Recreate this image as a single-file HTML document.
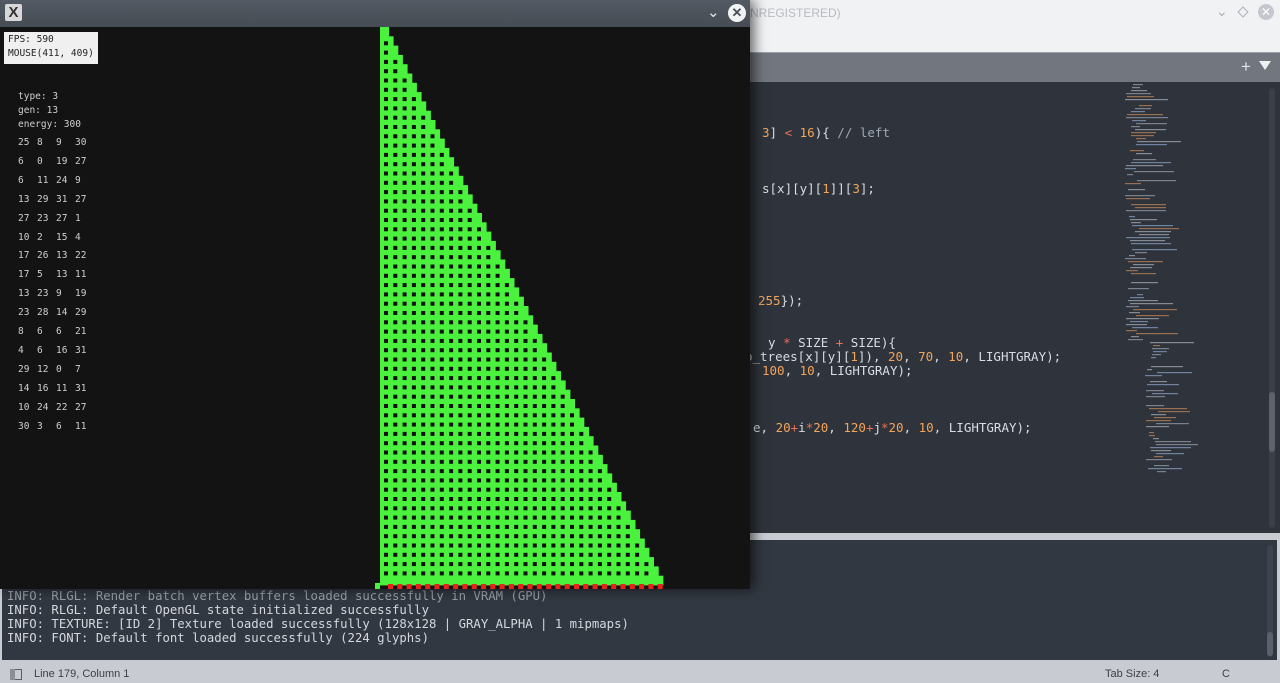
<!DOCTYPE html>
<html><head><meta charset="utf-8"><style>
*{margin:0;padding:0;box-sizing:border-box}
body{width:1280px;height:683px;overflow:hidden;background:#2f343c;position:relative;font-family:"Liberation Sans",sans-serif}
.abs{position:absolute}
.code{position:absolute;font-family:"DejaVu Sans Mono","Liberation Mono",monospace;font-size:12.5px;color:#d8dde3;white-space:pre}
.o{color:#f2a45a}.p{color:#e8725a}.c{color:#a0a8b4}
.log{position:absolute;left:7px;font-family:"DejaVu Sans Mono","Liberation Mono",monospace;font-size:12.3px;color:#d4d8de;white-space:pre}
.g{position:absolute;font-family:"DejaVu Sans Mono",monospace;font-size:9.5px;color:#cfcfcf;white-space:pre;letter-spacing:0px}
</style></head><body>
<div class="abs" style="left:750px;top:0;width:530px;height:52px;background:#f1f2f4"></div>
<div class="abs" style="left:750px;top:6px;font-size:12px;color:#b8bcc2">NREGISTERED)</div>
<div class="abs" style="left:1216px;top:3px;font-size:14px;color:#aab0b8">&#8964;</div>
<div class="abs" style="left:1239px;top:8px;width:8px;height:8px;border:1px solid #aab0b8;transform:rotate(45deg)"></div>
<div class="abs" style="left:1258px;top:4px;width:16px;height:16px;border-radius:50%;background:#c4c8ce;color:#fff;font-size:12px;line-height:16px;text-align:center">✕</div>
<div class="abs" style="left:750px;top:52px;width:530px;height:30px;background:#72767e;border-top:1px solid #9aa0a8"></div>
<div class="abs" style="left:1241px;top:57px;font-size:17px;color:#e0e3e6">+</div>
<div class="abs" style="left:1259px;top:61px;width:0;height:0;border-left:6px solid transparent;border-right:6px solid transparent;border-top:9px solid #eef0f2"></div>
<div class="code" style="left:762px;top:125px"><span class="o">3</span>] <span class="p">&lt;</span> <span class="o">16</span>){ <span class="c">// left</span></div>
<div class="code" style="left:762px;top:181px">s[x][y][<span class="o">1</span>]][<span class="o">3</span>];</div>
<div class="code" style="left:758px;top:293px"><span class="o">255</span>});</div>
<div class="code" style="left:768px;top:335px">y <span class="p">*</span> SIZE <span class="p">+</span> SIZE){</div>
<div class="code" style="left:745px;top:349px">o_trees[x][y][<span class="o">1</span>]), <span class="o">20</span>, <span class="o">70</span>, <span class="o">10</span>, LIGHTGRAY);</div>
<div class="code" style="left:762px;top:363px"><span class="o">100</span>, <span class="o">10</span>, LIGHTGRAY);</div>
<div class="code" style="left:753px;top:420px">e, <span class="o">20</span><span class="p">+</span>i<span class="p">*</span><span class="o">20</span>, <span class="o">120</span><span class="p">+</span>j<span class="p">*</span><span class="o">20</span>, <span class="o">10</span>, LIGHTGRAY);</div>
<svg id="mm" class="abs" style="left:1120px;top:82px" width="90" height="400"></svg>
<div class="abs" style="left:1269px;top:88px;width:6px;height:440px;background:#3a4049;border-radius:3px"></div>
<div class="abs" style="left:1269px;top:392px;width:6px;height:60px;background:#5c636c;border-radius:3px"></div>
<div class="abs" style="left:0;top:533px;width:1280px;height:7px;background:#c9cdd2"></div>
<div class="abs" style="left:0;top:540px;width:1280px;height:120px;background:#323841;border-left:2px solid #c9cdd2;border-right:3px solid #c9cdd2"></div>
<div class="abs" style="left:1267px;top:545px;width:6px;height:112px;background:#3d444d;border-radius:3px"></div>
<div class="abs" style="left:1267px;top:632px;width:6px;height:24px;background:#5a616a;border-radius:3px"></div>
<div class="log" style="top:589px;color:#9aa0a8">INFO: RLGL: Render batch vertex buffers loaded successfully in VRAM (GPU)</div>
<div class="log" style="top:603px">INFO: RLGL: Default OpenGL state initialized successfully</div>
<div class="log" style="top:617px">INFO: TEXTURE: [ID 2] Texture loaded successfully (128x128 | GRAY_ALPHA | 1 mipmaps)</div>
<div class="log" style="top:631px">INFO: FONT: Default font loaded successfully (224 glyphs)</div>
<div class="abs" style="left:0;top:660px;width:1280px;height:23px;background:#c8ccd2"></div>
<div class="abs" style="left:10px;top:669px;width:12px;height:11px;border:1px solid #5a5f66"></div>
<div class="abs" style="left:10px;top:669px;width:5px;height:11px;background:#8a8f96"></div>
<div class="abs" style="left:34px;top:668px;font-size:11px;color:#3c4148">Line 179, Column 1</div>
<div class="abs" style="left:1105px;top:668px;font-size:11px;color:#3c4148">Tab Size: 4</div>
<div class="abs" style="left:1222px;top:668px;font-size:11px;color:#3c4148">C</div>
<div class="abs" style="left:0;top:0;width:750px;height:589px;background:#131313;box-shadow:4px 0 12px rgba(0,0,0,.6)"></div>
<div class="abs" style="left:0;top:0;width:750px;height:27px;background:linear-gradient(#535a63,#464c54)"></div>
<div class="abs" style="left:5px;top:4px;width:17px;height:17px;background:#d8d8d8;border-radius:2px;font-size:15px;line-height:17px;text-align:center;font-weight:bold"><span style="color:#333">X</span></div>
<div class="abs" style="left:707px;top:3px;font-size:15px;color:#e6e8ea">&#8964;</div>
<div class="abs" style="left:728px;top:4px;width:18px;height:18px;border-radius:50%;background:#f2f3f4;color:#4a5058;font-size:13px;line-height:18px;text-align:center;font-weight:bold">✕</div>
<div class="abs" style="left:4px;top:32px;width:94px;height:32px;background:#f0f0f0"></div>
<div class="g" style="left:8px;top:34px;color:#222">FPS: 590</div>
<div class="g" style="left:8px;top:48px;color:#222">MOUSE(411, 409)</div>
<div class="g" style="left:18px;top:91px">type: 3</div>
<div class="g" style="left:18px;top:105px">gen: 13</div>
<div class="g" style="left:18px;top:119px">energy: 300</div>
<div id="nums"></div>
<svg id="tri" class="abs" style="left:0;top:0" width="750" height="589"></svg>
<script>
var rows=[[25,8,9,30],[6,0,19,27],[6,11,24,9],[13,29,31,27],[27,23,27,1],[10,2,15,4],[17,26,13,22],[17,5,13,11],[13,23,9,19],[23,28,14,29],[8,6,6,21],[4,6,16,31],[29,12,0,7],[14,16,11,31],[10,24,22,27],[30,3,6,11]];
var h='',xs=[18,37,56,75];
rows.forEach(function(r,i){r.forEach(function(v,j){h+='<div class="g" style="left:'+xs[j]+'px;top:'+(137+i*18.9)+'px">'+v+'</div>';});});
document.getElementById('nums').innerHTML=h;
var c=9.3,s='';
for(var r=0;r<60;r++){var y=27+r*c,re=389+r*4.65;
 s+='<rect x="380" y="'+y.toFixed(1)+'" width="'+(re-380).toFixed(1)+'" height="'+(c+0.4)+'" fill="#4af23e"/>';
 if(r>=1&&r<59){for(var k=0;;k++){var dx=384+k*c;if(dx+4>re-3)break;s+='<rect x="'+dx.toFixed(1)+'" y="'+(y+5).toFixed(1)+'" width="4" height="4" fill="#101010"/>';}}
}
s+='<rect x="375" y="583" width="5" height="6" fill="#4af23e"/>';
for(var k=0;k<30;k++){var dx=388+k*c;s+='<rect x="'+dx.toFixed(1)+'" y="584" width="5" height="5" fill="#e8231c"/>';}
document.getElementById('tri').innerHTML=s;
var m='',cols=['#9aa3ae','#c48a5a','#8aa4c8','#a8b0bb'];
var seed=7;function rnd(){seed=(seed*9301+49297)%233280;return seed/233280;}
for(var i=0;i<130;i++){var y=2+i*3;if(rnd()<0.15)continue;var ind=Math.min(40,(i>85?20:0)+Math.floor(rnd()*15));var w=5+rnd()*40;
 m+='<rect x="'+(5+ind)+'" y="'+y+'" width="'+w.toFixed(0)+'" height="1.2" fill="'+cols[Math.floor(rnd()*4)]+'" opacity="0.7"/>';}
document.getElementById('mm').innerHTML=m;
</script>
</body></html>
